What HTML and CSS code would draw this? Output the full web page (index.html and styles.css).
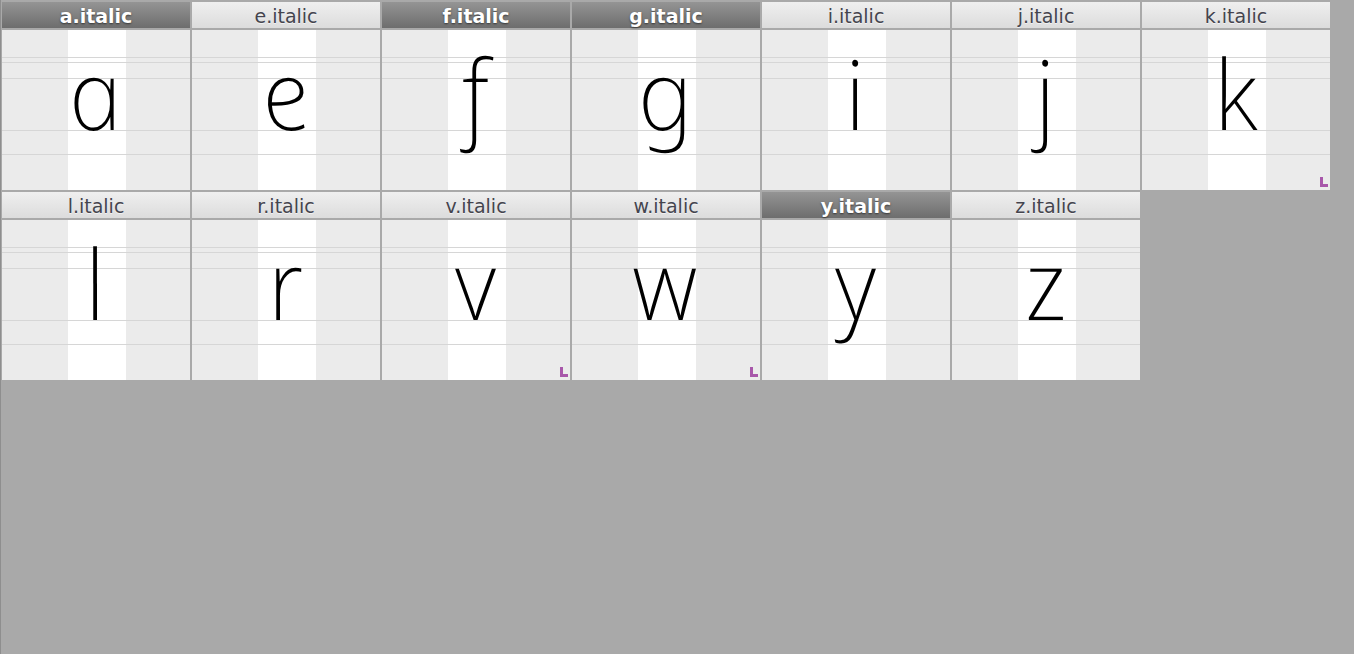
FILE: index.html
```html
<!DOCTYPE html>
<html>
<head>
<meta charset="utf-8">
<link rel="stylesheet" href="styles.css">
</head>
<body>
<div class="page">
  <div class="grid">
    <div class="cell sel"><div class="hd">a.italic</div><div class="gl"><span>a</span></div></div>
    <div class="cell"><div class="hd">e.italic</div><div class="gl"><span>e</span></div></div>
    <div class="cell sel"><div class="hd">f.italic</div><div class="gl"><span>f</span></div></div>
    <div class="cell sel"><div class="hd">g.italic</div><div class="gl"><span>g</span></div></div>
    <div class="cell"><div class="hd">i.italic</div><div class="gl"><span>i</span></div></div>
    <div class="cell"><div class="hd">j.italic</div><div class="gl"><span>j</span></div></div>
    <div class="cell"><div class="hd">k.italic</div><div class="gl"><span>k</span><i class="mark"></i></div></div>
    <div class="cell"><div class="hd">l.italic</div><div class="gl"><span>l</span></div></div>
    <div class="cell"><div class="hd">r.italic</div><div class="gl"><span>r</span></div></div>
    <div class="cell"><div class="hd">v.italic</div><div class="gl"><span>v</span><i class="mark"></i></div></div>
    <div class="cell"><div class="hd">w.italic</div><div class="gl"><span>w</span><i class="mark"></i></div></div>
    <div class="cell sel"><div class="hd">y.italic</div><div class="gl"><span>y</span></div></div>
    <div class="cell"><div class="hd">z.italic</div><div class="gl"><span>z</span></div></div>
  </div>
</div>
</body>
</html>
```
FILE: styles.css
```css
html, body {
  margin: 0;
  padding: 0;
  height: 100%;
  background: #a9a9a9;
}
.page {
  box-sizing: border-box;
  height: 100%;
  border-left: 1px solid #8e8e8e;
  padding: 2px 0 0 1px;
}
.grid {
  display: grid;
  grid-template-columns: repeat(7, 188px);
  grid-auto-rows: 188px;
  gap: 2px;
}
.cell {
  display: flex;
  flex-direction: column;
  gap: 2px;
}
.hd {
  box-sizing: border-box;
  height: 26px;
  padding-top: 2px;
  line-height: 24px;
  text-align: center;
  font-family: "DejaVu Sans", sans-serif;
  font-size: 19px;
  color: #44444e;
  background: linear-gradient(to bottom, #efefef, #dcdcdc);
  text-shadow: 0 1px 0 rgba(255,255,255,0.6);
  white-space: nowrap;
}
.sel .hd {
  color: #fff;
  font-weight: bold;
  background: linear-gradient(to bottom, #949494, #6d6d6d);
  text-shadow: 0 1px 2px rgba(0,0,0,0.55);
}
.gl {
  position: relative;
  height: 160px;
  text-align: center;
  background-image:
    linear-gradient(to bottom,
      transparent 27px, #d6d6d6 27px, #d6d6d6 28px, transparent 28px,
      transparent 32px, #d6d6d6 32px, #d6d6d6 33px, transparent 33px,
      transparent 48px, #d6d6d6 48px, #d6d6d6 49px, transparent 49px,
      transparent 100px, #d6d6d6 100px, #d6d6d6 101px, transparent 101px,
      transparent 124px, #d6d6d6 124px, #d6d6d6 125px, transparent 125px),
    linear-gradient(to right, #ebebeb 66px, #fff 66px, #fff 124px, #ebebeb 124px);
}
.gl span {
  display: inline-block;
  margin-top: 14px;
  font-family: "Noto Sans", "Open Sans", sans-serif;
  font-style: italic;
  font-weight: 200;
  font-size: 97px;
  line-height: 97px;
  color: #000;
  transform: translateX(5px) skewX(12deg);
  transform-origin: 50% 88%;
}
.mark {
  position: absolute;
  right: 2px;
  bottom: 3px;
  width: 8px;
  height: 10px;
  background:
    linear-gradient(#a857aa, #a857aa) left top / 3px 10px no-repeat,
    linear-gradient(#a857aa, #a857aa) left bottom / 8px 3px no-repeat;
}
```
